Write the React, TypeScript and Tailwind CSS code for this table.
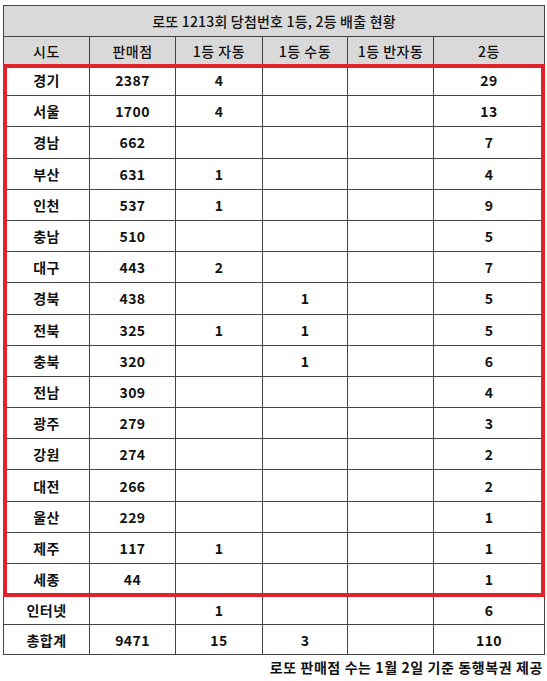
import React from "react";

type Row = { region: string; shops: string; auto: string; manual: string; semi: string; second: string };

const rows: Row[] = [
  { region: "경기", shops: "2387", auto: "4", manual: "", semi: "", second: "29" },
  { region: "서울", shops: "1700", auto: "4", manual: "", semi: "", second: "13" },
  { region: "경남", shops: "662", auto: "", manual: "", semi: "", second: "7" },
  { region: "부산", shops: "631", auto: "1", manual: "", semi: "", second: "4" },
  { region: "인천", shops: "537", auto: "1", manual: "", semi: "", second: "9" },
  { region: "충남", shops: "510", auto: "", manual: "", semi: "", second: "5" },
  { region: "대구", shops: "443", auto: "2", manual: "", semi: "", second: "7" },
  { region: "경북", shops: "438", auto: "", manual: "1", semi: "", second: "5" },
  { region: "전북", shops: "325", auto: "1", manual: "1", semi: "", second: "5" },
  { region: "충북", shops: "320", auto: "", manual: "1", semi: "", second: "6" },
  { region: "전남", shops: "309", auto: "", manual: "", semi: "", second: "4" },
  { region: "광주", shops: "279", auto: "", manual: "", semi: "", second: "3" },
  { region: "강원", shops: "274", auto: "", manual: "", semi: "", second: "2" },
  { region: "대전", shops: "266", auto: "", manual: "", semi: "", second: "2" },
  { region: "울산", shops: "229", auto: "", manual: "", semi: "", second: "1" },
  { region: "제주", shops: "117", auto: "1", manual: "", semi: "", second: "1" },
  { region: "세종", shops: "44", auto: "", manual: "", semi: "", second: "1" },
];

const extra: Row[] = [
  { region: "인터넷", shops: "", auto: "1", manual: "", semi: "", second: "6" },
  { region: "총합계", shops: "9471", auto: "15", manual: "3", semi: "", second: "110" },
];

const headers = ["시도", "판매점", "1등 자동", "1등 수동", "1등 반자동", "2등"];

function Cells({ r }: { r: Row }) {
  return (
    <>
      <td className="border border-[#444]">{r.region}</td>
      <td className="border border-[#444]">{r.shops}</td>
      <td className="border border-[#444]">{r.auto}</td>
      <td className="border border-[#444]">{r.manual}</td>
      <td className="border border-[#444]">{r.semi}</td>
      <td className="border border-[#444]">{r.second}</td>
    </>
  );
}

export default function App() {
  return (
    <div className="relative w-[547px] h-[681px] bg-white text-[#111] font-['Noto_Sans_CJK_KR','Noto_Sans',sans-serif]">
      <div className="pt-[5px] pl-[3px]">
        <table className="w-[541px] table-fixed border-collapse text-[14px] leading-[20px] text-center">
          <colgroup>
            <col className="w-[86px]" />
            <col className="w-[86px]" />
            <col className="w-[87px]" />
            <col className="w-[85px]" />
            <col className="w-[86px]" />
            <col className="w-[111px]" />
          </colgroup>
          <thead>
            <tr className="h-[31px] bg-[#d9d9d9]">
              <th colSpan={6} className="border border-[#444] font-medium tracking-[0.2px]">
                로또 1213회 당첨번호 1등, 2등 배출 현황
              </th>
            </tr>
            <tr className="h-[28px] bg-[#d9d9d9]">
              {headers.map((h) => (
                <th key={h} className="border border-[#444] font-medium tracking-[0.5px]">
                  {h}
                </th>
              ))}
            </tr>
          </thead>
          <tbody className="font-bold tracking-[0.4px]">
            {rows.map((r) => (
              <tr key={r.region} className="h-[31.2px]">
                <Cells r={r} />
              </tr>
            ))}
            {extra.map((r) => (
              <tr key={r.region} className="h-[30px]">
                <Cells r={r} />
              </tr>
            ))}
          </tbody>
        </table>
        <p className="mt-[2px] pr-[4px] text-right text-[14px] leading-[20px] font-bold tracking-[0.6px]">
          로또 판매점 수는 1월 2일 기준 동행복권 제공
        </p>
      </div>
      {/* red highlight box drawn over the 17 regional rows */}
      <div className="pointer-events-none absolute left-[3px] top-[64px] h-[533px] w-[542px] border-4 border-[#e0232b]" />
    </div>
  );
}
